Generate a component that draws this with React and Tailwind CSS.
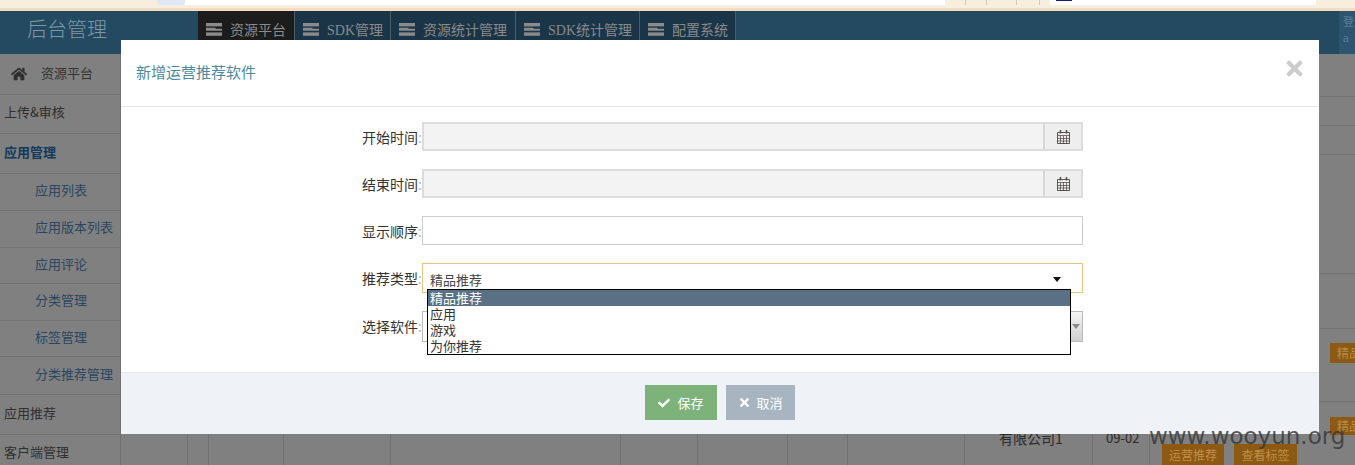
import { FaCheck, FaHome, FaTimes } from "react-icons/fa";

const navItems = [
  { label: "资源平台", width: "w-[97px]", active: true },
  { label: "SDK管理", width: "w-[96px]" },
  { label: "资源统计管理", width: "w-[125px]" },
  { label: "SDK统计管理", width: "w-[124px]" },
  { label: "配置系统", width: "w-[96px]" },
];

const sideItems = [
  { label: "上传&审核", height: "h-[39px]", className: "pl-1 text-[#2f2f2f]" },
  { label: "应用管理", height: "h-[40px]", className: "pl-1 font-bold text-[#123a5c]" },
  { label: "应用列表", height: "h-[37px]", className: "pl-[35px] text-[#2a4660]" },
  { label: "应用版本列表", height: "h-[37px]", className: "pl-[35px] text-[#2a4660]" },
  { label: "应用评论", height: "h-[36px]", className: "pl-[35px] text-[#2a4660]" },
  { label: "分类管理", height: "h-[37px]", className: "pl-[35px] text-[#2a4660]" },
  { label: "标签管理", height: "h-[36px]", className: "pl-[35px] text-[#2a4660]" },
  { label: "分类推荐管理", height: "h-[38px]", className: "pl-[35px] text-[#2a4660]" },
  { label: "应用推荐", height: "h-[40px]", className: "pl-1 text-[#2f2f2f]" },
  { label: "客户端管理", height: "h-[38px]", className: "pl-1 text-[#2f2f2f]" },
];

const tableCols = [
  "w-[67px]",
  "w-[21px]",
  "w-[75px]",
  "w-[107px]",
  "w-[230px]",
  "w-[77px]",
  "w-[90px]",
  "w-[60px]",
  "w-[117px]",
];

const options = ["精品推荐", "应用", "游戏", "为你推荐"];

const StackIcon = () => (
  <svg width="16" height="13" viewBox="0 0 16 13" className="shrink-0" fill="#8b8b8b">
    <path d="M0 0h16v3.4H0z" />
    <path d="M0 4.8h9.5v.9H16v2.1H0z" />
    <path d="M0 9.4h16v3.4H0z" />
  </svg>
);

const CalendarIcon = () => (
  <svg width="13" height="15" viewBox="0 0 13 15" fill="none" stroke="#5a5050" strokeWidth="1">
    <path d="M.5 3.5h12v11H.5z" />
    <path d="M.5 6.5h12M.5 9.5h12M.5 12h12M3.5 6.5v8M6.5 6.5v8M9.5 6.5v8" strokeWidth=".8" />
    <path d="M3.5 1v3.5M9.5 1v3.5" strokeWidth="1.6" />
  </svg>
);

const Caret = ({ color }) => (
  <svg width="8" height="5" viewBox="0 0 8 5" className="shrink-0">
    <path d="M0 0h8L4 5z" fill={color} />
  </svg>
);

const Label = ({ text }) => (
  <label className="h-[29px] w-[60px] shrink-0 text-[14px] leading-[30px] text-[#333]">
    {text}
    <span className="text-[#bbb]">:</span>
  </label>
);

const DateRow = ({ text }) => (
  <div className="flex">
    <Label text={text} />
    <div className="flex h-[29px] w-[661px] border-2 border-[#dcdcdc] bg-[#f3f3f3]">
      <div className="flex-1" />
      <div className="flex w-[38px] items-center justify-center border-l-2 border-[#d6d6d6] bg-[#eeeeee]">
        <CalendarIcon />
      </div>
    </div>
  </div>
);

const App = () => {
  return (
    <div className="relative flex h-[465px] w-[1355px] flex-col overflow-hidden bg-[#808080] font-['Liberation_Serif','Noto_Sans_CJK_SC',serif]">
      {/* browser chrome */}
      <div className="flex h-[11px] shrink-0 items-start border-b-[3px] border-[#f5dcc0] bg-[#f8eedd]">
        <div className="ml-[157px] h-[5px] w-[28px] rounded-b-sm bg-[#dfe8f5]" />
        <div className="h-[5px] w-[760px] bg-white" />
        <div className="ml-[20px] h-[5px] w-[22px] border-x border-[#d8c8b0]" />
        <div className="h-[5px] w-[30px] border-r border-[#d8c8b0]" />
        <div className="h-[5px] w-[23px] border-r border-[#d8c8b0]" />
        <div className="ml-[10px] h-[5px] w-[266px] bg-white pl-[6px]">
          <div className="h-[1px] w-[16px] bg-[#1a1a70]" />
        </div>
      </div>

      {/* top header */}
      <header className="flex h-[43px] shrink-0 bg-[#234a60]">
        <div className="flex w-[198px] shrink-0 items-center pb-[8px] pl-[27px] font-['Noto_Sans_CJK_SC',sans-serif] text-[20px] font-light text-[#7f98a8]">
          后台管理
        </div>
        {navItems.map((item) => (
          <div
            key={item.label}
            className={`flex items-start gap-2 border-r border-[#4a5c68] pl-2 pt-[12px] text-[14px] leading-[16px] text-[#8a8a8a] ${item.width} ${
              item.active ? "bg-[#1c1c1c]" : "bg-[#1a3547]"
            }`}
          >
            <StackIcon />
            <span className="whitespace-nowrap">{item.label}</span>
          </div>
        ))}
        <div className="ml-auto w-[16px] overflow-hidden bg-[#2b5570] pl-1 pt-1 text-[11px] leading-[15px] text-[#5f7f95]">
          <div>登</div>
          <div className="text-[13px]">a</div>
        </div>
      </header>

      <div className="flex flex-1 font-['Noto_Sans_CJK_SC',sans-serif]">
        {/* sidebar */}
        <aside className="w-[121px] shrink-0 border-r border-[#707070]">
          <div className="flex h-[41px] items-center gap-[14px] border-b border-[#727272] pl-[11px] text-[13px] text-[#333]">
            <FaHome className="text-[16px] text-[#2f2f2f]" />
            <span className="pb-[2px]">资源平台</span>
          </div>
          {sideItems.map((item) => (
            <div
              key={item.label}
              className={`flex items-center whitespace-nowrap border-b border-[#747474] pb-[4px] text-[13px] ${item.height} ${item.className}`}
            >
              {item.label}
            </div>
          ))}
        </aside>

        {/* table behind the dialog */}
        <main className="flex-1 text-[#2a2a2a]">
          <div className="h-[43px] border-b border-[#737373]" />
          <div className="h-[29px] border-b border-[#737373]" />
          <div className="h-[29px] border-b border-[#737373]" />
          <div className="h-[119px] border-b border-[#737373]" />
          <div className="h-[55px] border-b border-[#737373]" />
          <div className="flex h-[73px] justify-end border-b border-[#737373] pt-[14px]">
            <div className="h-[20px] w-[25px] overflow-hidden whitespace-nowrap bg-[#8c5a12] pl-[7px] text-[12px] leading-[20px] text-[#b98a45]">
              精品
            </div>
          </div>
          <div className="flex h-[63px]">
            {tableCols.map((col, i) => (
              <div key={i} className={`shrink-0 border-r border-[#727272] ${col}`} />
            ))}
            <div className="w-[128px] shrink-0 border-r border-[#727272] pl-[34px] pt-[28px] text-[14px] leading-[16px]">
              <span className="whitespace-nowrap">有限公司1</span>
            </div>
            <div className="w-[57px] shrink-0 border-r border-[#727272] pl-[13px] pt-[28px] text-[13px] leading-[16px]">
              09-02
            </div>
            <div className="flex-1 pl-[12px] pt-[42px]">
              <div className="flex gap-[10px] text-[12px] leading-[21px] text-[#c08f4a]">
                <span className="h-[21px] w-[62px] shrink-0 bg-[#8c5a12] text-center">运营推荐</span>
                <span className="h-[21px] w-[63px] shrink-0 bg-[#8c5a12] text-center">查看标签</span>
              </div>
            </div>
          </div>
        </main>
      </div>

      {/* dialog */}
      <div className="absolute left-[121px] top-[40px] flex h-[394px] w-[1198px] flex-col bg-white font-['Noto_Sans_CJK_SC',sans-serif]">
        <div className="flex h-[67px] shrink-0 items-start justify-between border-b border-[#e5e5e5] pl-[15px] pr-[13px]">
          <h3 className="pt-[21px] text-[15px] font-normal leading-[22px] text-[#4a8a9e]">新增运营推荐软件</h3>
          <FaTimes className="mt-[17px] text-[23px] text-[#cccccc]" />
        </div>

        <div className="flex h-[265px] shrink-0 flex-col gap-[18px] pl-[241px] pt-[15px]">
          <DateRow text="开始时间" />
          <DateRow text="结束时间" />
          <div className="flex">
            <Label text="显示顺序" />
            <div className="h-[29px] w-[661px] border border-[#cccccc] bg-white" />
          </div>
          <div className="flex">
            <Label text="推荐类型" />
            <div className="relative h-[30px] w-[661px] border border-[#e6c67f] bg-white">
              <div className="flex h-full items-center justify-between pl-[7px] pr-[21px] pt-[3px] text-[13px] text-[#444]">
                <span>精品推荐</span>
                <Caret color="#111" />
              </div>
              <ul className="absolute left-[4px] top-[25px] z-10 w-[644px] border border-black bg-white text-[13px] leading-[16px] text-[#333]">
                {options.map((opt, i) => (
                  <li key={opt} className={`h-[16px] pl-[2px] ${i === 0 ? "bg-[#5a7085] text-white" : ""}`}>
                    {opt}
                  </li>
                ))}
              </ul>
            </div>
          </div>
          <div className="flex">
            <Label text="选择软件" />
            <div className="flex h-[31px] w-[661px] justify-end border border-[#bbbbbb] bg-white">
              <div className="flex w-[12px] items-center justify-center bg-gradient-to-b from-[#f5f5f5] to-[#cfcfcf]">
                <Caret color="#888" />
              </div>
            </div>
          </div>
        </div>

        <div className="flex flex-1 justify-center gap-[9px] border-t border-[#e5e8ec] bg-[#eff2f6] pt-[12px]">
          <button className="flex h-[35px] w-[72px] items-center justify-center gap-[7px] bg-[#7db37a] text-[13px] text-white">
            <FaCheck className="text-[12px]" />
            保存
          </button>
          <button className="flex h-[35px] w-[69px] items-center justify-center gap-[5px] bg-[#a8b5c1] text-[13px] text-white">
            <FaTimes className="text-[13px]" />
            取消
          </button>
        </div>
      </div>

      {/* badge sticking out from behind the dialog */}
      <div className="absolute left-[1330px] top-[417px] h-[18px] w-[25px] overflow-hidden whitespace-nowrap bg-[#8c5a12] pl-[7px] font-['Noto_Sans_CJK_SC',sans-serif] text-[12px] leading-[18px] text-[#b98a45]">
        精品
      </div>

      {/* watermark */}
      <div className="absolute left-[1149px] top-[421px] font-['DejaVu_Sans',sans-serif] text-[23px] leading-[30px] text-[#3a3a3a]/85">
        www.wooyun.org
      </div>
    </div>
  );
};

export default App;
